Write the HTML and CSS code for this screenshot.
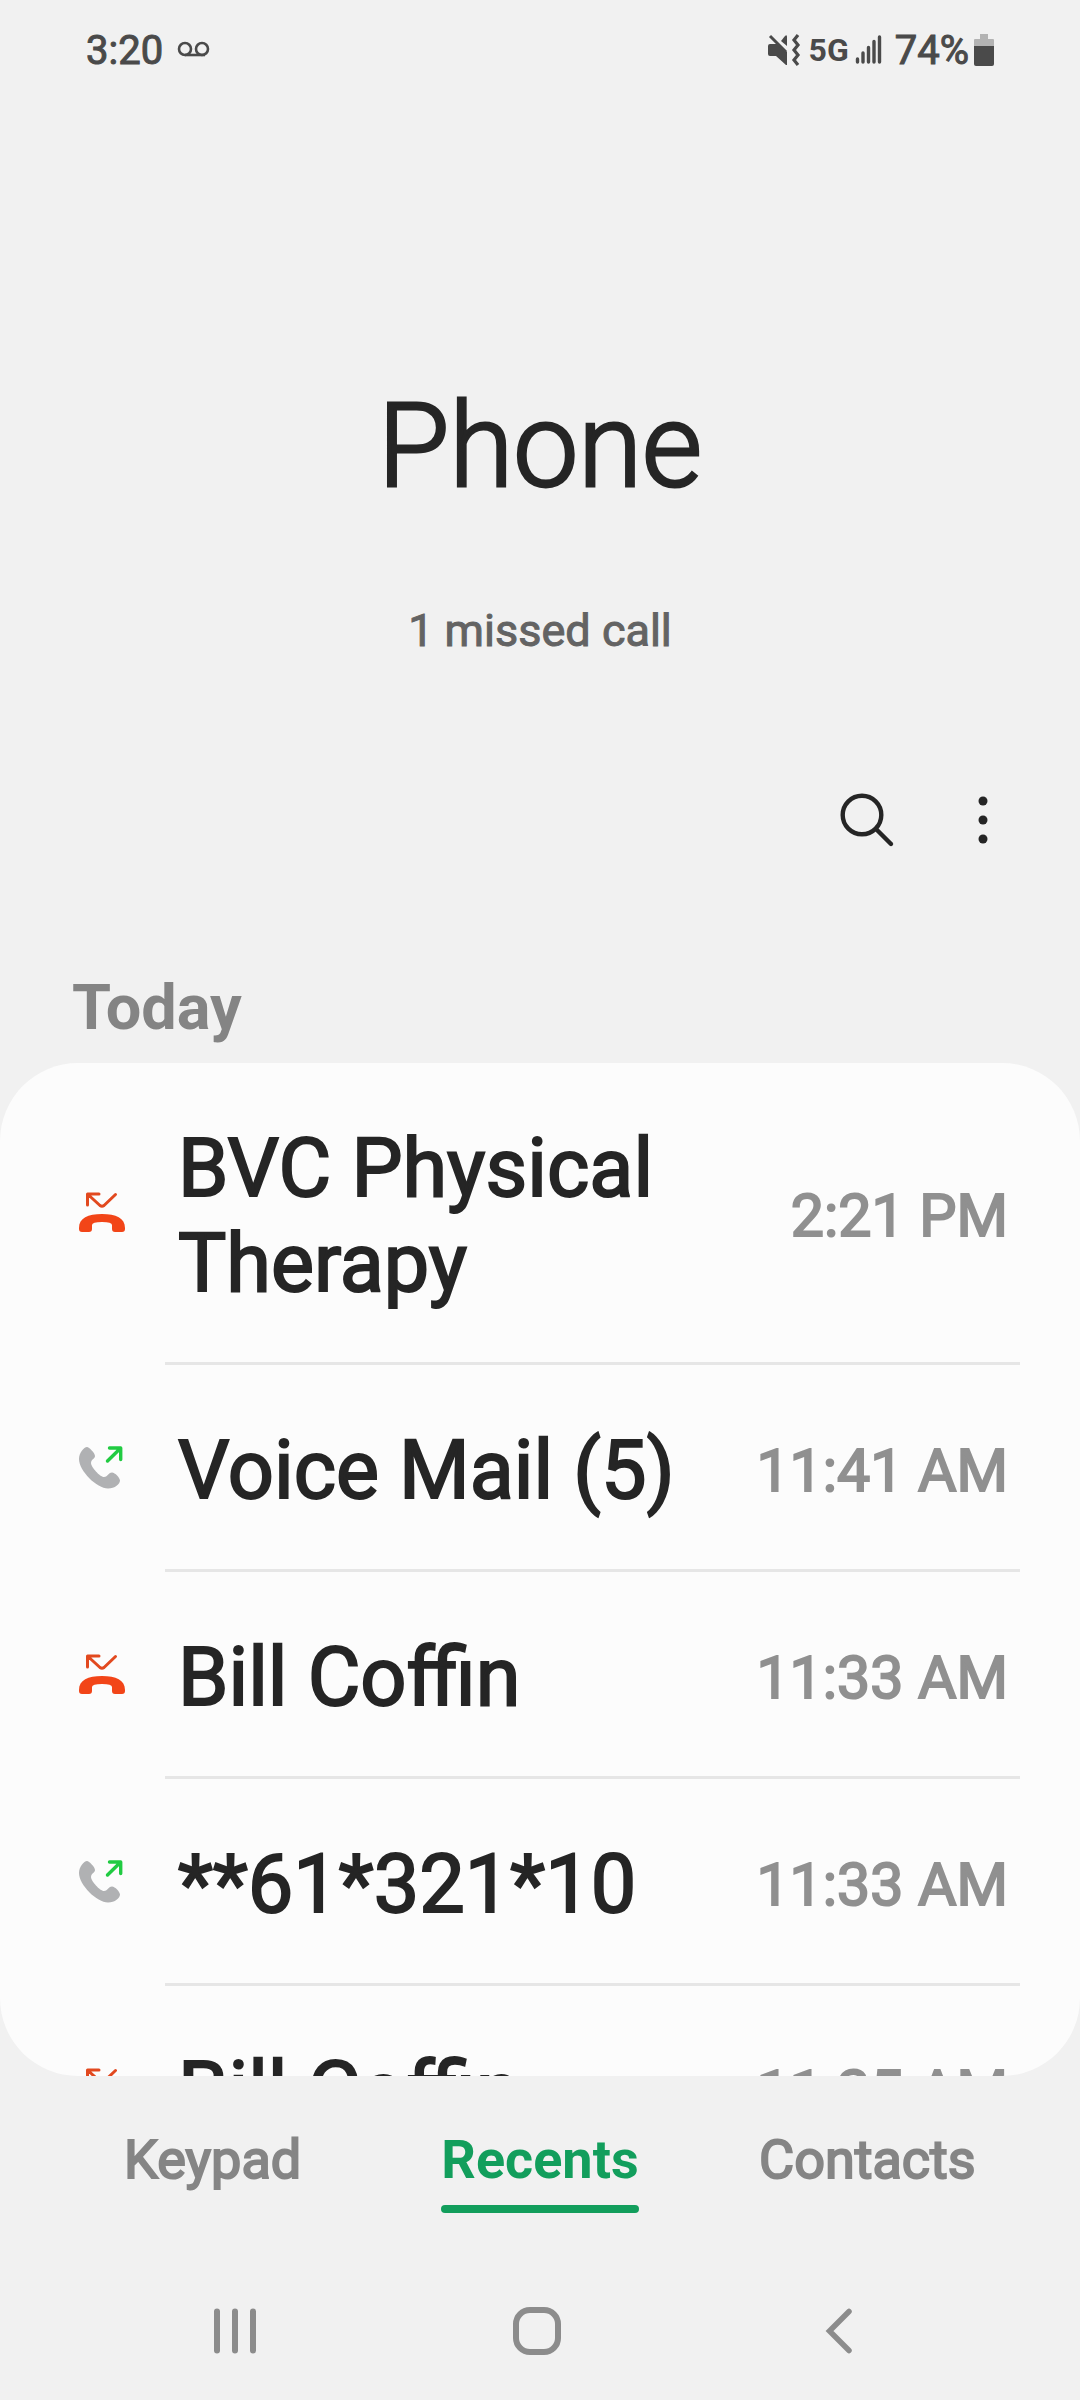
FILE: index.html
```html
<!DOCTYPE html>
<html lang="en">

<head>
    <meta charset="utf-8">
    <meta name="viewport" content="width=device-width, initial-scale=1">
    <title>Phone</title>
    <link rel="stylesheet" href="styles.css">
</head>

<body>
    <svg class="sprite" aria-hidden="true">
        <symbol id="missed" viewBox="0 0 52 48">
            <path d="M11.5 15V4H23M12 4.5L24 15.5Q26 17 28 15.5L39.5 4.5" fill="none" stroke="#e2491f" stroke-width="3" stroke-linecap="round" stroke-linejoin="round" />
            <path d="M3 38C3 28 12 24 26 24S49 28 49 38V39Q49 42 46 42H39Q36 42 36 39V35Q36 32 26 32T16 35V39Q16 42 13 42H6Q3 42 3 39Z" fill="#f24518" />
        </symbol>
        <symbol id="outgoing" viewBox="0 0 52 48">
            <path d="M11 2C13 2 19 8 19 11C19 14 15 14 15 18C15 22 24 32 28 32C32 32 32 27.5 36 27.5C39 27.5 44 33 44 35.5C44 39 39 43.5 32 43.5C21 43.5 3 26 3 14C3 8 8 2 11 2Z" fill="#b0b1b3" />
            <path d="M31.5 16L44.5 3.2M33.5 3H44.7V14.5" fill="none" stroke="#21cb42" stroke-width="3.4" stroke-linecap="round" stroke-linejoin="round" />
        </symbol>
    </svg>

    <div class="phone">
        <div class="status">
            <span class="clock">3:20</span>
            <svg class="voicemail" width="34" height="18" viewBox="0 0 34 18" fill="none" stroke="#4a4a4a" stroke-width="2.6">
                <circle cx="8" cy="8" r="6" />
                <circle cx="25" cy="8" r="6" />
                <path d="M8 14H28" />
            </svg>
            <svg class="mute" width="34" height="32" viewBox="0 0 34 32" fill="#4a4a4a">
                <path d="M3 10H11L20 18V31H19L9 22H3Q1 22 1 20V12Q1 10 3 10Z" />
                <path d="M14 7L18 2Q20 0 20 3V12Z" />
                <path d="M3 2L19 18" stroke="#4a4a4a" stroke-width="3" />
                <path d="M31 1L27 6L31 11L27 16L31 21L27 26L31 31" fill="none" stroke="#4a4a4a" stroke-width="3.2" />
            </svg>
            <span class="network">5G</span>
            <svg class="signal" width="28" height="30" viewBox="0 0 28 30" stroke="#4a4a4a" stroke-width="3.4" stroke-linecap="round">
                <path d="M2.5 24V27M8 18V27M13.5 12.5V27M19 6.5V27M24.5 2V27" />
            </svg>
            <span class="percent">74%</span>
            <svg class="battery" width="22" height="32" viewBox="0 0 22 32">
                <path d="M7 0H15V5H20Q21 5 21 6V12H1V6Q1 5 2 5H7Z" fill="#b3b3b3" />
                <path d="M1 12H21V30Q21 32 19 32H3Q1 32 1 30Z" fill="#4a4a4a" />
            </svg>
        </div>

        <header>
            <h1>Phone</h1>
            <p>1 missed call</p>
        </header>

        <div class="actions">
            <button type="button" aria-label="Search">
                <svg width="60" height="60" viewBox="0 0 60 60" fill="none" stroke="#252525" stroke-width="4.4" stroke-linecap="round">
                    <circle cx="25" cy="25" r="19.3" />
                    <path d="M40 40L54 54" />
                </svg>
            </button>
            <button type="button" aria-label="More options">
                <svg width="60" height="60" viewBox="0 0 60 60" fill="#252525">
                    <circle cx="30" cy="11" r="4.5" />
                    <circle cx="30" cy="30" r="4.5" />
                    <circle cx="30" cy="49" r="4.5" />
                </svg>
            </button>
        </div>

        <h2>Today</h2>
        <ul class="calls">
            <li>
                <svg class="type" role="img" aria-label="Missed"><use href="#missed" /></svg>
                <div class="call"><span class="name">BVC Physical Therapy</span><time>2:21 PM</time></div>
            </li>
            <li>
                <svg class="type" role="img" aria-label="Outgoing"><use href="#outgoing" /></svg>
                <div class="call"><span class="name">Voice Mail (5)</span><time>11:41 AM</time></div>
            </li>
            <li>
                <svg class="type" role="img" aria-label="Missed"><use href="#missed" /></svg>
                <div class="call"><span class="name">Bill Coffin</span><time>11:33 AM</time></div>
            </li>
            <li>
                <svg class="type" role="img" aria-label="Outgoing"><use href="#outgoing" /></svg>
                <div class="call"><span class="name">**61*321*10</span><time>11:33 AM</time></div>
            </li>
            <li>
                <svg class="type" role="img" aria-label="Missed"><use href="#missed" /></svg>
                <div class="call"><span class="name">Bill Coffin</span><time>11:25 AM</time></div>
            </li>
        </ul>

        <nav class="tabs">
            <a href="#keypad">Keypad</a>
            <a href="#recents" class="active" aria-current="page">Recents</a>
            <a href="#contacts">Contacts</a>
        </nav>

        <div class="system">
            <button type="button" aria-label="Recent apps">
                <svg width="60" height="60" viewBox="0 0 60 60" stroke="#8c8c8c" stroke-width="6" stroke-linecap="round">
                    <path d="M12 10.5V49.5M30 10.5V49.5M48 10.5V49.5" />
                </svg>
            </button>
            <button type="button" aria-label="Home">
                <svg width="60" height="60" viewBox="0 0 60 60" fill="none" stroke="#8c8c8c" stroke-width="6">
                    <rect x="9" y="9" width="42" height="42" rx="14" />
                </svg>
            </button>
            <button type="button" aria-label="Back">
                <svg width="60" height="60" viewBox="0 0 60 60" fill="none" stroke="#8c8c8c" stroke-width="5.5" stroke-linecap="round">
                    <path d="M40 10.5L20.5 30L40 49.5" />
                </svg>
            </button>
        </div>
    </div>
</body>

</html>
```

FILE: styles.css
```css
* {
    margin: 0;
    padding: 0;
    box-sizing: border-box;
}

body {
    background-color: #f1f1f1;
    color: #252525;
    font-family: Roboto, "Liberation Sans", sans-serif;
}

svg {
    display: block;
    flex: none;
}

button {
    border: none;
    background: none;
}

a {
    text-decoration: none;
}

.sprite {
    position: absolute;
    width: 0;
    height: 0;
}

.phone {
    display: flex;
    flex-direction: column;
    height: 100vh;
}

.status {
    display: flex;
    align-items: center;
    height: 100px;
    padding: 0 85px 0 86px;
    color: #4a4a4a;
    font-size: 40px;
    -webkit-text-stroke: 1px;
}

.voicemail {
    margin-left: 14px;
}

.mute {
    margin-left: auto;
}

.network {
    margin: 0 6px 0 8px;
    font-size: 32px;
    font-weight: bold;
    -webkit-text-stroke: 0;
}

.percent {
    margin: 0 4px 0 12px;
}

header {
    padding-top: 276px;
    text-align: center;
}

h1 {
    font-size: 116px;
    font-weight: 300;
    line-height: 140px;
    -webkit-text-stroke: 3px;
}

header p {
    margin-top: 88px;
    color: #636363;
    font-size: 45px;
    line-height: 53px;
    -webkit-text-stroke: 1px;
}

.actions {
    display: flex;
    justify-content: flex-end;
    gap: 56px;
    margin-top: 133px;
    padding-right: 67px;
}

h2 {
    margin: 121px 0 18px;
    padding-left: 72px;
    color: #848484;
    font-size: 63px;
    line-height: 74px;
}

.calls {
    flex: 1;
    min-height: 0;
    overflow: hidden;
    padding: 0 60px 0 76px;
    list-style: none;
    background-color: #fcfcfc;
    border-radius: 78px;
}

.calls li {
    display: flex;
}

.type {
    width: 52px;
    height: 48px;
    margin: auto 37px auto 0;
}

.call {
    display: flex;
    flex: 1;
    align-items: center;
    justify-content: space-between;
    padding: 58px 12px 51px 13px;
    border-bottom: 3px solid #e6e6e6;
}

.name {
    font-size: 81px;
    line-height: 95px;
    -webkit-text-stroke: 2px;
}

time {
    flex: none;
    color: #909090;
    font-size: 59px;
    line-height: 70px;
    -webkit-text-stroke: 2px;
}

.tabs {
    display: grid;
    grid-template-columns: repeat(3, 1fr);
    justify-items: center;
    padding: 52px 49px 0;
}

.tabs a {
    color: #858585;
    font-size: 54px;
    line-height: 63px;
    -webkit-text-stroke: 2px;
}

/* underline of the selected tab */
.tabs a::after {
    content: "";
    display: block;
    height: 8px;
    margin-top: 14px;
    border-radius: 4px;
}

.tabs .active {
    color: #129e5c;
    font-weight: bold;
    -webkit-text-stroke: 0;
}

.tabs .active::after {
    background-color: #129e5c;
}

.system {
    display: grid;
    grid-template-columns: repeat(3, 1fr);
    justify-items: center;
    padding: 88px 90px 39px 84px;
}
```
